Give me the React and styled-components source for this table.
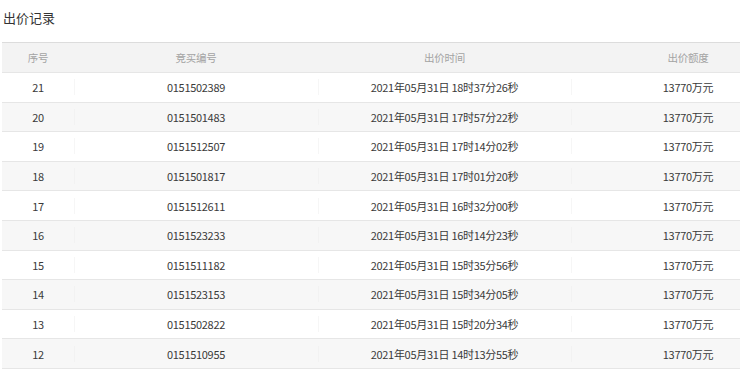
import styled, { createGlobalStyle } from "styled-components";

/* ───────────────── GLOBAL ───────────────── */

const Global = createGlobalStyle`
  html, body {
    margin: 0;
    padding: 0;
    background: #fff;
    overflow: hidden;
  }
  body {
    font-family: "Noto Sans CJK SC", "Noto Sans", sans-serif;
    color: #333;
  }
`;

/* ───────────────── WRAPPER ───────────────── */

const Page = styled.div`
  width: 740px;
  height: 375px;
  overflow: hidden;
  padding-left: 2px;
  box-sizing: border-box;
`;

const Title = styled.h3`
  margin: 0;
  height: 42px;
  padding: 8px 0 0 1px;
  box-sizing: border-box;
  font-size: 13px;
  font-weight: 400;
  line-height: 20px;
  color: #333;
`;

/* ───────────────── TABLE ───────────────── */

const Table = styled.div`
  width: 803px;
  border-top: 1px solid #dcdcdc;
`;

const Row = styled.div`
  display: grid;
  grid-template-columns: 72px 244px 253px 234px;
  height: ${(p) => (p.$head ? "30px" : "29.6px")};
  box-sizing: border-box;
  border-bottom: 1px solid #e6e6e6;
  background: ${(p) => (p.$head ? "#f3f3f3" : p.$alt ? "#f7f7f7" : "#fff")};
`;

const Cell = styled.div`
  position: relative;
  display: flex;
  align-items: center;
  justify-content: center;
  font-size: ${(p) => (p.$head ? "10.5px" : "11px")};
  letter-spacing: -0.3px;
  color: ${(p) => (p.$head ? "#a3a3a3" : "#3a3a3a")};
  white-space: nowrap;

  &::before {
    content: "";
    display: ${(p) => (p.$sep ? "block" : "none")};
    position: absolute;
    left: 0;
    top: 50%;
    height: 15px;
    transform: translateY(-50%);
    border-left: 1px dotted #ededed;
  }
`;

/* ───────────────── DATA ───────────────── */

const bids = [
  [21, "0151502389", "18时37分26秒"],
  [20, "0151501483", "17时57分22秒"],
  [19, "0151512507", "17时14分02秒"],
  [18, "0151501817", "17时01分20秒"],
  [17, "0151512611", "16时32分00秒"],
  [16, "0151523233", "16时14分23秒"],
  [15, "0151511182", "15时35分56秒"],
  [14, "0151523153", "15时34分05秒"],
  [13, "0151502822", "15时20分34秒"],
  [12, "0151510955", "14时13分55秒"],
];

/* ───────────────── COMPONENT ───────────────── */

export default function App() {
  return (
    <Page>
      <Global />
      <Title>出价记录</Title>

      <Table>
        <Row $head>
          <Cell $head>序号</Cell>
          <Cell $head>竞买编号</Cell>
          <Cell $head>出价时间</Cell>
          <Cell $head>出价额度</Cell>
        </Row>

        {bids.map(([no, code, time], i) => (
          <Row key={no} $alt={i % 2 === 1}>
            <Cell>{no}</Cell>
            <Cell $sep>{code}</Cell>
            <Cell $sep>2021年05月31日 {time}</Cell>
            <Cell $sep>13770万元</Cell>
          </Row>
        ))}
      </Table>
    </Page>
  );
}
